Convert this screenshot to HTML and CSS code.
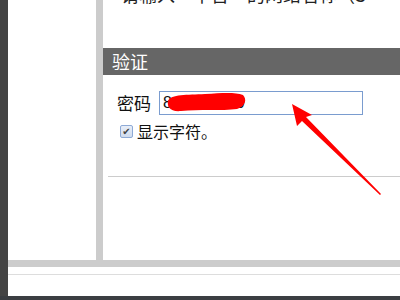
FILE: index.html
```html
<!DOCTYPE html>
<html lang="zh-CN">
<head>
    <meta charset="UTF-8">
    <title>验证</title>
    <link rel="stylesheet" href="styles.css">
</head>
<body>

<div class="frame">
    <div class="main">
        <div class="side"></div>
        <div class="divider"></div>
        <div class="content">
            <p class="intro">请输入“平台”的网络名称（S</p>
            <h2 class="section-title">验证</h2>
            <div class="field">
                <label for="pwd">密码</label>
                <div class="input-wrap">
                    <input type="text" id="pwd" value="8xxxxxxxx9">
                    <svg class="scribble" width="80" height="20" viewBox="0 0 80 20">
                        <path d="M1 9 C4 2 20 3 38 2 C55 1 68 0 76 3 C80 7 79 14 70 17 C55 19 32 17 14 19 C3 20 0 15 1 9 Z" fill="#ff0000"/>
                    </svg>
                </div>
            </div>
            <label class="check">
                <span class="box">✔</span>
                <span>显示字符。</span>
            </label>
            <hr class="sep">
            <svg class="arrow" width="100" height="100" viewBox="0 0 100 100">
                <polygon points="0,0 20,11 14,13 89,90 88,91 10,17 5,22" fill="#ff0000"/>
            </svg>
        </div>
    </div>
    <div class="bar"></div>
    <div class="footer"></div>
</div>

</body>
</html>
```

FILE: styles.css
```css
body {
    margin: 0;
    background-color: #3b3e42;
    font-family: "Noto Sans CJK SC", "Noto Sans", sans-serif;
    overflow: hidden;
}
.frame {
    margin-left: 8px;
    height: 296px;
    background: white;
    box-shadow: -8px 0 0 #444;
}
.main {
    display: flex;
    height: 260px;
}
.side {
    width: 88px;
}
.divider {
    width: 7px;
    background: #ccc;
}
.content {
    flex: 1;
    position: relative;
    overflow: hidden;
}
.intro {
    margin: -18px 0 0 18px;
    font-size: 18px;
    line-height: 24px;
    white-space: nowrap;
    color: #222;
}
.section-title {
    margin: 42px 0 0 0;
    height: 27px;
    background: #666;
    color: white;
    font-size: 18px;
    font-weight: normal;
    line-height: 27px;
    padding-left: 9px;
}
.field {
    display: flex;
    align-items: center;
    margin: 14px 0 0 14px;
}
.field label {
    font-size: 17px;
    color: #111;
    width: 42px;
}
.input-wrap {
    position: relative;
}
.input-wrap input {
    width: 196px;
    height: 22px;
    box-sizing: content-box;
    padding: 0 3px;
    border: 1px solid #7a9ccf;
    font-family: "Liberation Sans", sans-serif;
    font-size: 16px;
    color: #111;
    outline: none;
}
.scribble {
    position: absolute;
    left: 8px;
    top: 3px;
}
.check {
    display: flex;
    align-items: center;
    margin: 4px 0 0 17px;
    font-size: 16px;
    color: #111;
}
.box {
    width: 11px;
    height: 11px;
    margin-right: 4px;
    border: 1px solid #8eaad6;
    border-radius: 2px;
    background: linear-gradient(#e8eef8, #d0dcee);
    color: #444;
    font-size: 10px;
    line-height: 11px;
    text-align: center;
    font-family: "DejaVu Sans", sans-serif;
}
.sep {
    margin: 33px 0 0 5px;
    border: 0;
    border-top: 1px solid #ccc;
}
.arrow {
    position: absolute;
    left: 189px;
    top: 104px;
}
.bar {
    height: 7px;
    background: #ccc;
}
.footer {
    margin-top: 7px;
    border-top: 1px solid #ddd;
}
```
